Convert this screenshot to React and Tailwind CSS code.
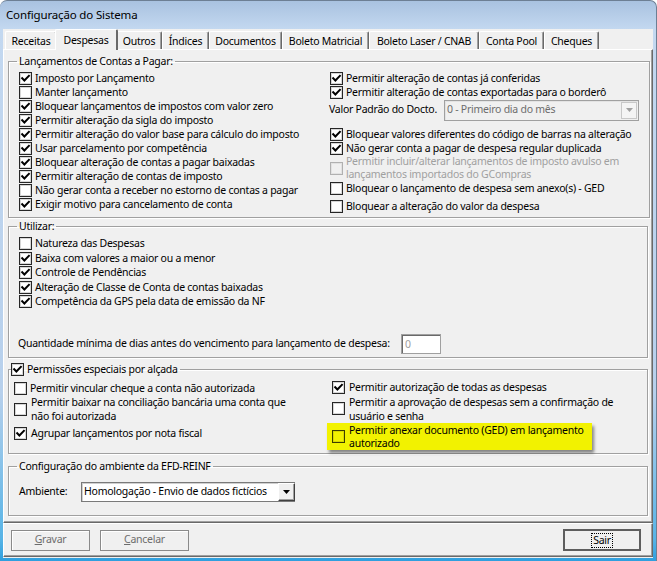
import clsx from 'clsx'

function Check({ checked, disabled, yellow }) {
  const fill = yellow ? '#f2f200' : disabled ? '#f0f0f0' : '#ffffff'
  const stroke = yellow ? '#3d3d00' : disabled ? '#b0b0b0' : '#262626'
  return (
    <svg width="13" height="13" viewBox="0 0 13 13" className="shrink-0">
      <rect x="0.5" y="0.5" width="12" height="12" fill={fill} stroke={stroke} />
      <rect x="1.5" y="1.5" width="10" height="10" fill="none" stroke={yellow ? '#d8d800' : disabled ? '#e2e2e2' : '#d6d6d6'} />
      {checked && (
        <path d="M3.2 6.2 L5.4 8.5 L9.9 3.8" fill="none" stroke="#000" strokeWidth="2" strokeLinecap="square" />
      )}
    </svg>
  )
}

function Row({ checked, disabled, children, className }) {
  return (
    <div className={clsx('flex items-center gap-[3px] h-[14px] leading-[14px] whitespace-nowrap', className)}>
      <Check checked={checked} disabled={disabled} />
      <span className={disabled ? 'text-[#a0a0a0]' : ''}>{children}</span>
    </div>
  )
}

function Group({ legend, className, children }) {
  return (
    <fieldset
      className={clsx(
        'border border-[#a0a0a0] shadow-[inset_1px_1px_0_#fff,1px_1px_0_#fff] px-[10px]',
        className
      )}
    >
      <legend className="px-[2px] -ml-[2px] h-[14px] leading-[14px] flex items-center gap-[3px] whitespace-nowrap">{legend}</legend>
      {children}
    </fieldset>
  )
}

function Arrow({ color = '#000' }) {
  return (
    <svg width="7" height="4" viewBox="0 0 7 4">
      <path d="M0 0h7L3.5 4z" fill={color} />
    </svg>
  )
}

const tabs = [
  ['Receitas', 52],
  ['Despesas', 63],
  ['Outros', 46],
  ['Índices', 47],
  ['Documentos', 73],
  ['Boleto Matricial', 87],
  ['Boleto Laser / CNAB', 110],
  ['Conta Pool', 65],
  ['Cheques', 55],
]

export default function App() {
  return (
    <div className="w-[657px] h-[561px] flex flex-col overflow-hidden rounded-t-[7px] border-t border-r border-[#6d7f94] bg-[linear-gradient(to_bottom,#a9c2e0_0%,#c3d8f0_5%,#b7d0ec_70%,#58b4e6_96%,#2f9fde_100%)] pl-[3px] pr-[3px] pb-[3px] font-['Noto_Sans',sans-serif] text-[10.5px] tracking-[-0.25px] text-black">
      {/* barra de titulo */}
      <div className="h-[28px] shrink-0 flex items-center pl-[3px] text-[11.5px] tracking-[-0.15px]">
        Configuração do Sistema
      </div>

      <div className="flex-1 flex flex-col bg-[#f0f0f0]">
        {/* abas */}
        <div className="h-[20px] shrink-0 flex items-end pl-[2px] whitespace-nowrap">
          {tabs.map(([t, w]) =>
            t === 'Despesas' ? (
              <div
                key={t}
                style={{ width: w }}
                className="relative z-10 h-[21px] -mb-[1px] -mx-[2px] flex items-start justify-center pt-[3px] leading-[14px] bg-[#f0f0f0] border-l border-t border-white border-r-2 border-r-[#696969] rounded-t-[2px]"
              >
                {t}
              </div>
            ) : (
              <div
                key={t}
                style={{ width: w }}
                className="h-[18px] flex items-center justify-center leading-[14px] border-l border-t border-white border-r border-r-[#696969] rounded-t-[2px] shadow-[inset_-1px_0_0_#a0a0a0]"
              >
                {t}
              </div>
            )
          )}
        </div>

        {/* pagina */}
        <div className="h-[474px] shrink-0 flex flex-col border-l border-t border-white border-r border-b border-r-[#696969] border-b-[#696969] shadow-[inset_-1px_-1px_0_#a0a0a0] px-[4px] pt-[4px]">
          <Group legend="Lançamentos de Contas a Pagar:" className="h-[164px]">
            <div className="flex pt-[3px]">
              <div className="w-[311px] flex flex-col">
                <Row checked>Imposto por Lançamento</Row>
                <Row>Manter lançamento</Row>
                <Row checked>Bloquear lançamentos de impostos com valor zero</Row>
                <Row checked>Permitir alteração da sigla do imposto</Row>
                <Row checked>Permitir alteração do valor base para cálculo do imposto</Row>
                <Row checked>Usar parcelamento por competência</Row>
                <Row checked>Bloquear alteração de contas a pagar baixadas</Row>
                <Row checked>Permitir alteração de contas de imposto</Row>
                <Row>Não gerar conta a receber no estorno de contas a pagar</Row>
                <Row checked>Exigir motivo para cancelamento de conta</Row>
              </div>
              <div className="flex-1 flex flex-col">
                <Row checked>Permitir alteração de contas já conferidas</Row>
                <Row checked>Permitir alteração de contas exportadas para o borderô</Row>
                <div className="h-[22px] flex items-center -ml-[1px] whitespace-nowrap">
                  <span className="w-[115px]">Valor Padrão do Docto.</span>
                  <div className="w-[195px] h-[21px] flex items-center border border-[#a0a0a0] bg-[#f0f0f0] shadow-[inset_1px_1px_0_#e3e3e3]">
                    <span className="flex-1 pl-[2px] text-[#6d6d6d]">0 - Primeiro dia do mês</span>
                    <div className="w-[16px] h-[17px] mr-[1px] flex items-center justify-center border border-[#c8c8c8] bg-[#f4f4f4]">
                      <Arrow color="#a0a0a0" />
                    </div>
                  </div>
                </div>
                <Row checked className="mt-[6px]">Bloquear valores diferentes do código de barras na alteração</Row>
                <Row checked>Não gerar conta a pagar de despesa regular duplicada</Row>
                <div className="h-[26px] flex items-center gap-[3px] whitespace-nowrap">
                  <Check disabled />
                  <span className="leading-[13px] text-[#a0a0a0]">
                    Permitir incluir/alterar lançamentos de imposto avulso em
                    <br />
                    lançamentos importados do GCompras
                  </span>
                </div>
                <Row>Bloquear o lançamento de despesa sem anexo(s) - GED</Row>
                <Row className="mt-[4px]">Bloquear a alteração do valor da despesa</Row>
              </div>
            </div>
          </Group>

          <Group legend="Utilizar:" className="h-[139px] mt-[1px]">
            <div className="flex flex-col pt-[3px]">
              <Row>Natureza das Despesas</Row>
              <Row checked className="mt-[1px]">Baixa com valores a maior ou a menor</Row>
              <Row checked>Controle de Pendências</Row>
              <Row checked className="mt-[1px]">Alteração de Classe de Conta de contas baixadas</Row>
              <Row checked>Competência da GPS pela data de emissão da NF</Row>
              <div className="mt-[26px] h-[20px] flex items-center gap-[3px] -ml-[1px] whitespace-nowrap">
                <span className="w-[380px]">Quantidade mínima de dias antes do vencimento para lançamento de despesa:</span>
                <div className="w-[40px] h-[20px] bg-white border border-[#a0a0a0] shadow-[inset_1px_1px_0_#696969] pl-[3px] leading-[18px] text-[#a0a0a0]">
                  0
                </div>
              </div>
            </div>
          </Group>

          <Group
            legend={
              <>
                <span className="-ml-[3px]"><Check checked /></span>
                <span>Permissões especiais por alçada</span>
              </>
            }
            className="h-[92px] mt-[4px] !px-[5px]"
          >
            <div className="flex pt-[4px] whitespace-nowrap">
              <div className="w-[318px] flex flex-col">
                <Row className="mt-[1px]">Permitir vincular cheque a conta não autorizada</Row>
                <div className="h-[28px] flex items-center gap-[4px]">
                  <Check />
                  <span className="leading-[14px]">
                    Permitir baixar na conciliação bancária uma conta que
                    <br />
                    não foi autorizada
                  </span>
                </div>
                <Row checked className="mt-[3px] gap-[4px]">Agrupar lançamentos por nota fiscal</Row>
              </div>
              <div className="flex-1 flex flex-col">
                <Row checked className="gap-[4px]">Permitir autorização de todas as despesas</Row>
                <div className="h-[29px] flex items-center gap-[4px]">
                  <Check />
                  <span className="leading-[14px]">
                    Permitir a aprovação de despesas sem a confirmação de
                    <br />
                    usuário e senha
                  </span>
                </div>
                <div className="w-[265px] h-[27px] -ml-[5px] pl-[5px] flex items-center gap-[4px] bg-[#f2f200] shadow-[2px_3px_3px_rgba(0,0,0,0.45)]">
                  <Check yellow />
                  <span className="leading-[13px]">
                    Permitir anexar documento (GED) em lançamento
                    <br />
                    autorizado
                  </span>
                </div>
              </div>
            </div>
          </Group>

          <Group legend="Configuração do ambiente da EFD-REINF" className="h-[57px] mt-[5px]">
            <div className="flex items-center pt-[9px] whitespace-nowrap">
              <span className="w-[62px]">Ambiente:</span>
              <div className="w-[214px] h-[20px] flex items-center bg-white border border-[#7a7a7a] border-r-0 shadow-[inset_1px_1px_0_#d0d0d0]">
                <span className="flex-1 pl-[2px]">Homologação - Envio de dados fictícios</span>
                <div className="w-[17px] h-[18px] flex items-center justify-center bg-[#f0f0f0] border border-t-white border-l-white border-r-[#404040] border-b-[#404040] shadow-[inset_-1px_-1px_0_#a0a0a0]">
                  <Arrow />
                </div>
              </div>
            </div>
          </Group>
        </div>

        {/* botoes */}
        <div className="h-[34px] shrink-0 flex items-center px-[7px] border-l border-t border-white border-r border-b border-r-[#696969] border-b-[#696969] shadow-[inset_-1px_-1px_0_#a0a0a0]">
          <button className="w-[79px] h-[21px] border border-[#8a8a8a] shadow-[inset_1px_1px_0_#fff] text-[#6d6d6d]">
            <u>G</u>ravar
          </button>
          <button className="ml-[10px] w-[89px] h-[21px] border border-[#8a8a8a] shadow-[inset_1px_1px_0_#fff] text-[#6d6d6d]">
            <u>C</u>ancelar
          </button>
          <button className="ml-auto mr-[4px] w-[78px] h-[22px] border-2 border-[#5e5e5e] flex items-center justify-center">
            <span className="px-[1px] leading-[13px] outline outline-1 outline-dotted outline-[#000]">Sair</span>
          </button>
        </div>
      </div>
    </div>
  )
}
